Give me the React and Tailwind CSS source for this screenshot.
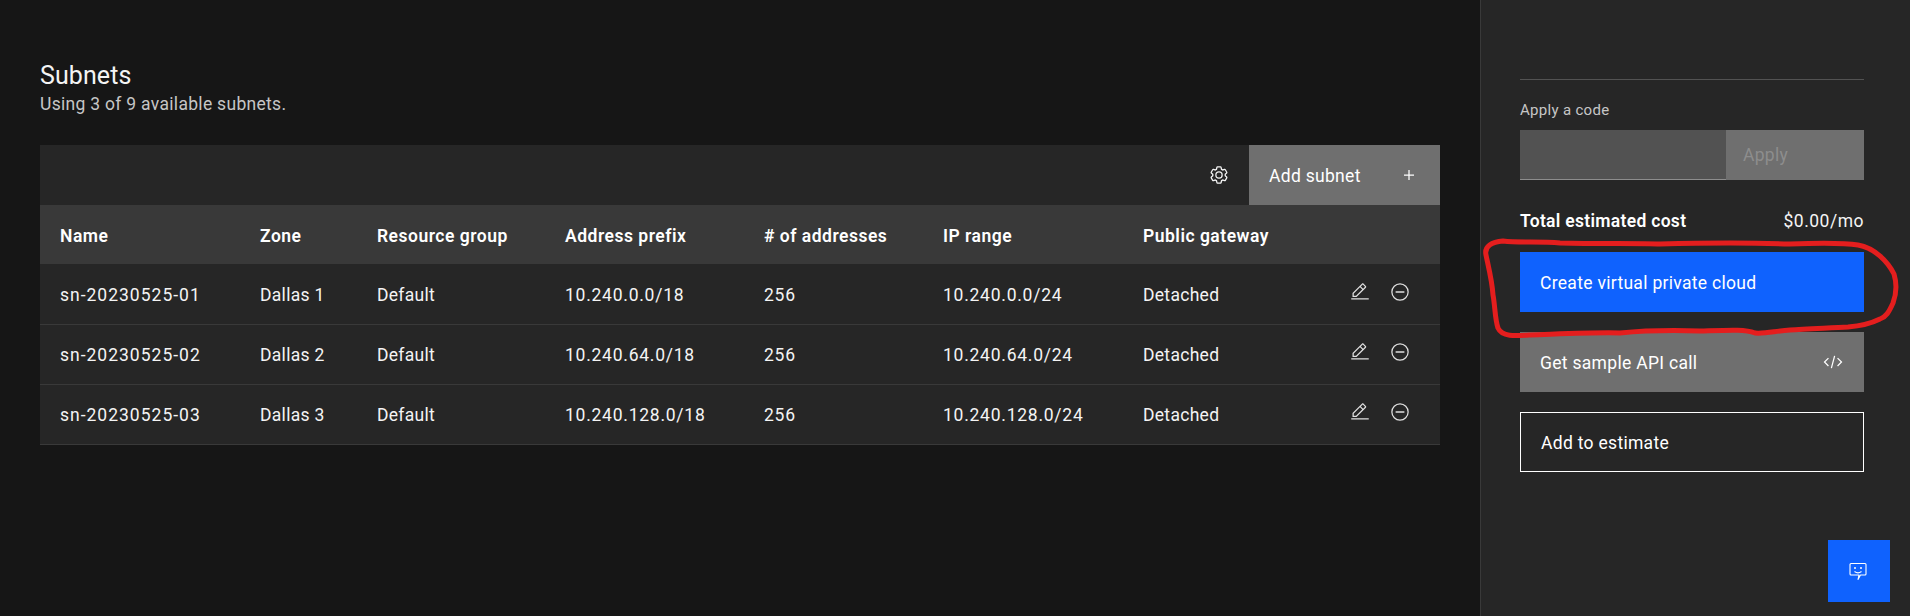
import React from "react";

const font = { fontFamily: 'Roboto, sans-serif' };

const subnets = [
  { name: "sn-20230525-01", zone: "Dallas 1", prefix: "10.240.0.0/18", range: "10.240.0.0/24" },
  { name: "sn-20230525-02", zone: "Dallas 2", prefix: "10.240.64.0/18", range: "10.240.64.0/24" },
  { name: "sn-20230525-03", zone: "Dallas 3", prefix: "10.240.128.0/18", range: "10.240.128.0/24" },
];

function GearIcon() {
  return (
    <svg viewBox="0 0 32 32" className="w-5 h-5" fill="#f4f4f4">
      <path d="M27,16.76c0-.25,0-.5,0-.76s0-.51,0-.77l1.92-1.68A2,2,0,0,0,29.3,11L26.94,7a2,2,0,0,0-1.73-1,2,2,0,0,0-.64.1l-2.43.82a11.35,11.35,0,0,0-1.31-.75l-.51-2.52a2,2,0,0,0-2-1.61H13.64a2,2,0,0,0-2,1.61l-.51,2.52a11.48,11.48,0,0,0-1.32.75L7.43,6.06A2,2,0,0,0,6.79,6,2,2,0,0,0,5.06,7L2.7,11a2,2,0,0,0,.41,2.51L5,15.24c0,.25,0,.5,0,.76s0,.51,0,.77L3.11,18.45A2,2,0,0,0,2.7,21L5.06,25a2,2,0,0,0,1.73,1,2,2,0,0,0,.64-.1l2.43-.82a11.35,11.35,0,0,0,1.31.75l.51,2.52a2,2,0,0,0,2,1.61h4.72a2,2,0,0,0,2-1.61l.51-2.52a11.48,11.48,0,0,0,1.32-.75l2.42.82a2,2,0,0,0,.64.1,2,2,0,0,0,1.73-1L29.3,21a2,2,0,0,0-.41-2.51ZM25.21,24l-3.43-1.16a8.86,8.86,0,0,1-2.71,1.57L18.36,28H13.64l-.71-3.55a9.36,9.36,0,0,1-2.7-1.57L6.79,24,4.43,20l2.72-2.4a8.9,8.9,0,0,1,0-3.13L4.43,12,6.79,8l3.43,1.16a8.86,8.86,0,0,1,2.71-1.57L13.64,4h4.72l.71,3.55a9.36,9.36,0,0,1,2.7,1.57L25.21,8,27.57,12l-2.72,2.4a8.9,8.9,0,0,1,0,3.13L27.57,20Z" />
      <path d="M16,22a6,6,0,1,1,6-6A5.94,5.94,0,0,1,16,22Zm0-10a3.91,3.91,0,0,0-4,4,3.91,3.91,0,0,0,4,4,3.91,3.91,0,0,0,4-4A3.91,3.91,0,0,0,16,12Z" />
    </svg>
  );
}

function EditIcon() {
  return (
    <svg viewBox="0 0 32 32" className="w-5 h-5" fill="#e0e0e0">
      <path d="M2 26H30V28H2zM25.4 9c.8-.8.8-2 0-2.8l-3.6-3.6c-.8-.8-2-.8-2.8 0l-15 15V24h6.4L25.4 9zM20.4 4L24 7.6l-3 3L17.4 7 20.4 4zM6 22v-3.6l10-10 3.6 3.6-10 10H6z" />
    </svg>
  );
}

function MinusCircleIcon() {
  return (
    <svg viewBox="0 0 32 32" className="w-5 h-5" fill="none" stroke="#e0e0e0" strokeWidth="2">
      <circle cx="16" cy="16" r="13" />
      <path d="M9 16H23" strokeWidth="2.4" />
    </svg>
  );
}

function PlusIcon() {
  return (
    <svg viewBox="0 0 32 32" className="w-5 h-5" fill="#ffffff">
      <path d="M17 15V8h-2v7H8v2h7v7h2v-7h7v-2z" />
    </svg>
  );
}

function CodeIcon() {
  return (
    <svg viewBox="0 0 32 32" className="w-5 h-5" fill="#ffffff">
      <path d="M31 16l-7 7-1.41-1.41L28.17 16l-5.58-5.59L24 9l7 7zM1 16l7-7 1.41 1.41L3.83 16l5.58 5.59L8 23l-7-7zM12.42 25.48L17.64 6l1.94.52L14.36 26z" />
    </svg>
  );
}

function FeedbackIcon() {
  return (
    <svg viewBox="0 0 20 20" className="w-5 h-5 -ml-[2px]" fill="none" stroke="#ffffff" strokeWidth="1.1">
      <path d="M3 2.5H17A1 1 0 0 1 18 3.5V13A1 1 0 0 1 17 14H12.5L10 18.5L11 14H3A1 1 0 0 1 2 13V3.5A1 1 0 0 1 3 2.5Z" strokeLinejoin="round" />
      <path d="M6.5 10.5C8.5 12 11.5 12 13.5 10.5" />
      <circle cx="7" cy="7" r="1" fill="#ffffff" stroke="none" />
      <circle cx="13" cy="7" r="1" fill="#ffffff" stroke="none" />
    </svg>
  );
}

export default function App() {
  return (
    <div className="relative flex h-[616px] bg-[#161616] text-[#f4f4f4] text-[17.5px] tracking-[0.3px] overflow-hidden" style={font}>
      {/* Main */}
      <div className="w-[1480px] px-10 pt-[60px]">
        <h2 className="text-[25px] leading-[32px] tracking-[0.1px] text-[#f4f4f4]">Subnets</h2>
        <p className="leading-[24px] text-[#c6c6c6]">Using 3 of 9 available subnets.</p>

        <div className="mt-[29px] bg-[#262626]">
          <div className="flex justify-end items-center h-[60px]">
            <div className="flex items-center justify-center w-10 h-10 mr-[10px]">
              <GearIcon />
            </div>
            <button className="flex items-center justify-between w-[191px] h-[60px] pl-5 pr-[21px] bg-[#6f6f6f] text-white">
              <span className="pt-[2px]">Add subnet</span>
              <PlusIcon />
            </button>
          </div>
          <table className="w-full table-fixed border-collapse text-left">
            <colgroup>
              <col className="w-[200px]" />
              <col className="w-[117px]" />
              <col className="w-[188px]" />
              <col className="w-[199px]" />
              <col className="w-[179px]" />
              <col className="w-[200px]" />
              <col className="w-[191px]" />
              <col />
            </colgroup>
            <thead>
              <tr className="h-[59px] bg-[#393939] text-white">
                {["Name", "Zone", "Resource group", "Address prefix", "# of addresses", "IP range", "Public gateway", ""].map((h, i) => (
                  <th key={i} className="pl-5 pt-1 font-semibold tracking-[0.5px]">{h}</th>
                ))}
              </tr>
            </thead>
            <tbody>
              {subnets.map((s) => (
                <tr key={s.name} className="h-[60px] border-b border-[#393939] text-[#f4f4f4]">
                  <td className="pl-5 pt-[2px] tracking-[1px]">{s.name}</td>
                  <td className="pl-5 pt-[2px]">{s.zone}</td>
                  <td className="pl-5 pt-[2px]">Default</td>
                  <td className="pl-5 pt-[2px] tracking-[0.75px]">{s.prefix}</td>
                  <td className="pl-5 pt-[2px] tracking-[0.75px]">256</td>
                  <td className="pl-5 pt-[2px] tracking-[0.75px]">{s.range}</td>
                  <td className="pl-5 pt-[2px]">Detached</td>
                  <td>
                    <div className="flex items-center gap-5 ml-[36px] -mt-[4px]">
                      <EditIcon />
                      <MinusCircleIcon />
                    </div>
                  </td>
                </tr>
              ))}
            </tbody>
          </table>
        </div>
      </div>

      {/* Summary panel */}
      <div className="w-[430px] border-l border-[#393939] bg-[#262626] pl-[39px] pr-[46px] pt-[79px]">
        <div className="border-t border-[#525252]" />
        <label className="block mt-[20px] text-[15px] leading-[20px] text-[#c6c6c6]">Apply a code</label>
        <div className="flex mt-[10px] h-[50px]">
          <div className="w-[206px] bg-[#525252] border-b border-[#8d8d8d]" />
          <button className="flex-1 text-left pl-[17px] bg-[#6f6f6f] text-[#8d8d8d]">Apply</button>
        </div>
        <div className="flex justify-between items-center mt-[29px] h-[24px]">
          <span className="font-semibold text-white">Total estimated cost</span>
          <span className="tracking-[0.5px]">$0.00/mo</span>
        </div>
        <button className="flex items-center w-full h-[60px] mt-[19px] pt-[2px] px-5 bg-[#0f62fe] text-white">
          Create virtual private cloud
        </button>
        <button className="flex items-center justify-between w-full h-[60px] mt-5 pl-5 pr-[21px] bg-[#6f6f6f] text-white">
          <span className="pt-[2px]">Get sample API call</span>
          <CodeIcon />
        </button>
        <button className="flex items-center w-full h-[60px] mt-5 pt-[2px] px-5 border border-white text-white">
          Add to estimate
        </button>
      </div>

      {/* Feedback button */}
      <button className="absolute left-[1828px] top-[540px] flex items-center justify-center w-[62px] h-[62px] bg-[#0f62fe]">
        <FeedbackIcon />
      </button>

      {/* Hand-drawn annotation */}
      <svg className="absolute inset-0 pointer-events-none" width="1910" height="616" fill="none">
        <path
          d="M1503 241C1520 243 1540 241 1560 243C1600 244 1640 243 1660 244C1700 243 1760 243 1790 244C1820 243 1845 243 1858 245C1875 248 1888 262 1894 274C1897 284 1896 295 1893 303C1889 312 1886 317 1880 319C1870 324 1860 326 1848 327C1830 328 1805 329 1790 330C1775 331 1765 334 1755 333C1745 329 1730 330 1700 331C1670 330 1640 331 1620 333C1600 332 1560 334 1530 335C1515 336 1502 337 1498 328C1495 320 1495 305 1493 295C1492 280 1488 265 1486 255C1484 246 1492 242 1503 241Z"
          stroke="#e41e1e"
          strokeWidth="5"
          strokeLinejoin="round"
        />
      </svg>
    </div>
  );
}
